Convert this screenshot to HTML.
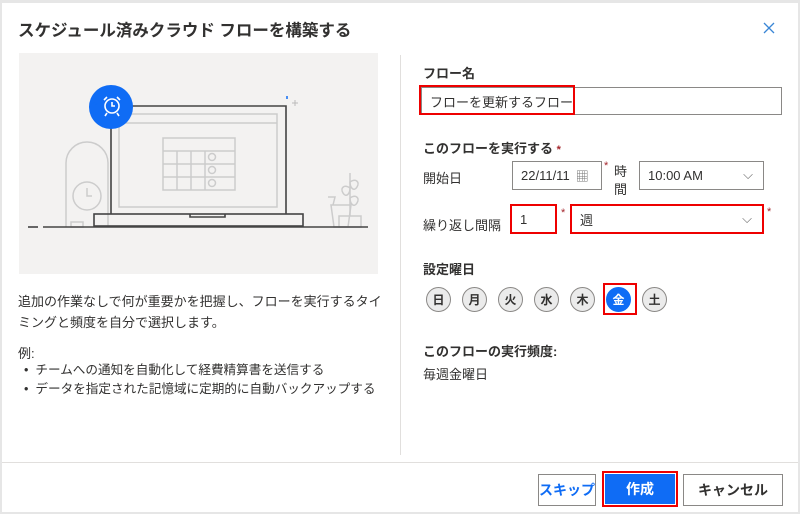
<!DOCTYPE html>
<html><head><meta charset="utf-8"><style>
*{box-sizing:border-box;margin:0;padding:0}
body{width:800px;height:514px;background:#fff;font-family:"Liberation Sans","Noto Sans CJK JP",sans-serif;color:#323130;position:relative;overflow:hidden}
.a{position:absolute}
.frame{left:0;top:0;width:800px;height:514px;border:2px solid #e6e6e6;border-top:3px solid #e6e6e6}
.t{font-size:13px}
.b{font-weight:bold}
.inp{border:1px solid #8a8886;background:#fff;font-size:13px;padding-left:8px;display:flex;align-items:center}
.red{border:2px solid #e00}
.star{color:#a4262c;font-size:11px}
.day{width:25px;height:25px;border-radius:50%;background:#ebebeb;border:1px solid #8a8886;font-size:12px;font-weight:bold;display:flex;align-items:center;justify-content:center;top:287px}
.btn{height:32px;border:1px solid #8a8886;font-size:14px;font-weight:bold;display:flex;align-items:center;justify-content:center;top:474px;background:#fff}
</style></head><body>
<div class="a frame"></div>
<div class="a b" style="left:18px;top:17px;font-size:16.5px">スケジュール済みクラウド フローを構築する</div>
<svg class="a" style="left:763px;top:22px" width="12" height="12"><path d="M1 1L11 11M11 1L1 11" stroke="#3a86d6" stroke-width="1.3"/></svg>
<div class="a" style="left:19px;top:53px;width:359px;height:221px;background:#f3f2f1"></div>
<svg class="a" style="left:19px;top:53px" width="359" height="221" viewBox="19 53 359 221">
<g fill="none" stroke="#ccc" stroke-width="1.5">
<rect x="119" y="114" width="158" height="93"/>
<line x1="119" y1="123" x2="277" y2="123"/>
<rect x="163" y="138" width="72" height="52"/>
<line x1="163" y1="151" x2="235" y2="151"/><line x1="163" y1="164" x2="235" y2="164"/><line x1="163" y1="177" x2="235" y2="177"/>
<line x1="177" y1="151" x2="177" y2="190"/><line x1="191" y1="151" x2="191" y2="190"/><line x1="205" y1="151" x2="205" y2="190"/>
<circle cx="212" cy="157" r="3.5"/><circle cx="212" cy="170" r="3.5"/><circle cx="212" cy="183" r="3.5"/>
<path d="M66 227V163a21 21 0 0 1 42 0V227"/><circle cx="87" cy="196" r="14"/><path d="M87 188v8h5"/><rect x="71" y="222" width="12" height="5"/>
<path d="M331 205h20l-3 22h-14z"/><path d="M328 197h7l-2 8" /><rect x="339" y="216" width="22" height="11"/><path d="M350 216v-43"/><path d="M350 188c-6-4-10 0-7 5s7 1 7-5zM350 182c6-4 10 0 7 5s-7 1-7-5zM350 198c6-4 10 0 7 5s-7 1-7-5z"/>
</g>
<g fill="none" stroke="#444" stroke-width="1.6">
<path d="M111 214V106h175v108"/><rect x="94" y="214" width="209" height="12"/><path d="M190 214v3h35v-3"/>
<line x1="28" y1="227" x2="38" y2="227"/><line x1="43" y1="227" x2="368" y2="227"/>
</g>
<circle cx="111" cy="107" r="22" fill="#0f6cf5"/>
<g fill="none" stroke="#fff" stroke-width="1.6"><circle cx="112" cy="106" r="7"/><path d="M112 102v4h3M104 100l3-3M120 100l-3-3M107 113l-2 3M117 113l2 3"/></g>
<path d="M99 112l-4 2M97 104l-4-1" stroke="#0f6cf5" stroke-width="1.5"/>
<path d="M287 96v3" stroke="#0f6cf5" stroke-width="1.5"/><path d="M295 100v6M292 103h6" stroke="#bbb" stroke-width="1"/>
</svg>
<div class="a t" style="left:18px;top:291px;line-height:21px;width:365px">追加の作業なしで何が重要かを把握し、フローを実行するタイミングと頻度を自分で選択します。</div>
<div class="a t" style="left:18px;top:343px">例:</div>
<div class="a" style="left:24px;top:361px;line-height:19px;font-size:12.6px">•&nbsp; チームへの通知を自動化して経費精算書を送信する<br>•&nbsp; データを指定された記憶域に定期的に自動バックアップする</div>
<div class="a" style="left:400px;top:55px;width:1px;height:400px;background:#e1dfdd"></div>
<div class="a" style="left:2px;top:462px;width:796px;height:1px;background:#e1dfdd"></div>
<div class="a t b" style="left:423px;top:63px">フロー名</div>
<div class="a inp" style="left:421px;top:87px;width:361px;height:28px">フローを更新するフロー</div>
<div class="a red" style="left:419px;top:85px;width:156px;height:30px"></div>
<div class="a t b" style="left:423px;top:138px">このフローを実行する <span class="star">*</span></div>
<div class="a t" style="left:423px;top:168px">開始日</div>
<div class="a inp" style="left:512px;top:161px;width:90px;height:29px">22/11/11 <span style="color:#777;margin-left:6px">▦</span></div>
<div class="a star" style="left:604px;top:160px">*</div>
<div class="a t" style="left:614px;top:163px;line-height:18px;width:14px">時間</div>
<div class="a inp" style="left:639px;top:161px;width:125px;height:29px">10:00 AM<span style="position:absolute;right:10px;top:5px;color:#666">⌵</span></div>
<div class="a t" style="left:423px;top:215px">繰り返し間隔</div>
<div class="a inp red" style="left:510px;top:204px;width:47px;height:30px">1</div>
<div class="a star" style="left:561px;top:207px">*</div>
<div class="a inp red" style="left:570px;top:204px;width:194px;height:30px">週<span style="position:absolute;right:10px;top:5px;color:#666">⌵</span></div>
<div class="a star" style="left:767px;top:206px">*</div>
<div class="a t b" style="left:423px;top:259px">設定曜日</div>
<div class="a day" style="left:426px">日</div>
<div class="a day" style="left:462px">月</div>
<div class="a day" style="left:498px">火</div>
<div class="a day" style="left:534px">水</div>
<div class="a day" style="left:570px">木</div>
<div class="a day" style="left:606px;background:#0f6cf5;color:#fff;border-color:#0f6cf5">金</div>
<div class="a red" style="left:603px;top:283px;width:34px;height:32px"></div>
<div class="a day" style="left:642px">土</div>
<div class="a t b" style="left:423px;top:341px">このフローの実行頻度:</div>
<div class="a t" style="left:423px;top:364px">毎週金曜日</div>
<div class="a btn" style="left:538px;width:58px;color:#0f6cf5">スキップ</div>
<div class="a red" style="left:602px;top:471px;width:76px;height:36px;background:#fff"></div>
<div class="a btn" style="left:605px;width:70px;background:#0f6cf5;color:#fff;border-color:#0f6cf5;top:474px;height:30px">作成</div>
<div class="a btn" style="left:683px;width:100px">キャンセル</div>
</body></html>
